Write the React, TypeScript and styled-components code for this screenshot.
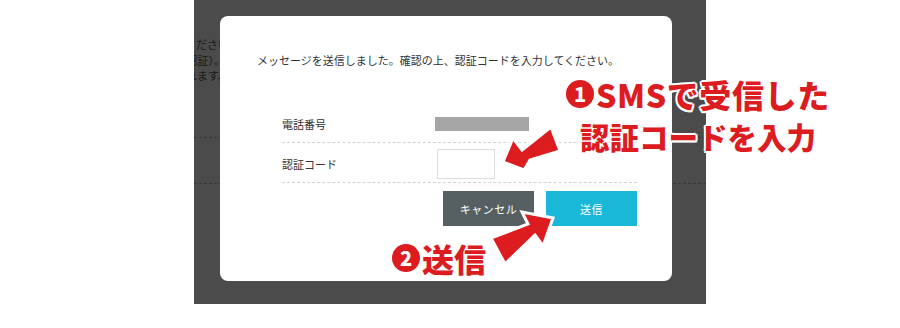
import styled, { createGlobalStyle } from "styled-components";

const GlobalStyle = createGlobalStyle`
  html, body {
    margin: 0;
    padding: 0;
    background: #ffffff;
  }
  body {
    font-family: "Noto Sans CJK JP", "Noto Sans", sans-serif;
  }
`;

const RED = "#dc1c1f";

const Stage = styled.div`
  position: relative;
  width: 900px;
  height: 328px;
  overflow: hidden;
  background: #ffffff;
  display: flex;
  padding-left: 194px;
  box-sizing: border-box;
`;

const Screen = styled.div`
  position: relative;
  width: 512px;
  height: 304px;
  background: #4b4b4b;
  overflow: hidden;
`;

const Underlay = styled.div`
  display: flex;
  flex-direction: column;
  padding-top: 37px;
`;

const UnderText = styled.div`
  width: 35px;
  display: flex;
  flex-direction: column;
  overflow: hidden;
  font-size: 11px;
  line-height: 15.5px;
  color: #1a1a1a;
`;

const UnderLine = styled.div<{ $shift?: number }>`
  display: flex;
  justify-content: flex-end;
  white-space: nowrap;
  padding-right: ${(p) => p.$shift ?? 0}px;
`;

const UnderRule = styled.div<{ $gap: number }>`
  margin-top: ${(p) => p.$gap}px;
  height: 0;
  border-top: 1px dashed rgba(0, 0, 0, 0.22);
`;

const Modal = styled.div`
  position: absolute;
  left: 26px;
  top: 16px;
  width: 452px;
  height: 265px;
  background: #ffffff;
  border-radius: 8px;
  color: #333333;
  font-size: 11px;
`;

const Message = styled.p`
  margin: 0;
  padding: 36px 0 0 37px;
  line-height: 16px;
  white-space: nowrap;
`;

const Form = styled.div`
  margin: 35px 0 0 62px;
  width: 355px;
  display: flex;
  flex-direction: column;
`;

const Row = styled.div`
  display: grid;
  grid-template-columns: 153px 1fr;
  align-items: center;
  height: 40px;
  box-sizing: border-box;
  padding-top: 2px;
  border-bottom: 1px dashed #d2d2d2;
`;

const Label = styled.span`
  line-height: 16px;
`;

const MaskedValue = styled.div`
  width: 94px;
  height: 14px;
  background: #a6a6a6;
`;

const CodeInput = styled.input`
  width: 58px;
  height: 30px;
  margin-left: 2px;
  box-sizing: border-box;
  border: 1px solid #dcdcdc;
  border-radius: 0;
  padding: 0;
  outline: none;
`;

const Actions = styled.div`
  display: flex;
  justify-content: flex-end;
  gap: 12px;
  margin-top: 8px;
`;

const Button = styled.button<{ $primary?: boolean }>`
  width: 91px;
  height: 35px;
  border: none;
  border-radius: 0;
  background: ${(p) => (p.$primary ? "#19b8d9" : "#565f61")};
  color: #ffffff;
  font-family: inherit;
  font-size: 11px;
  letter-spacing: 0.5px;
  cursor: pointer;
`;

const Callout = styled.div`
  position: absolute;
  display: flex;
  flex-direction: column;
  align-items: center;
  color: ${RED};
  font-weight: 900;
  line-height: 42px;
  white-space: nowrap;
  text-shadow: 2px 0 0 #fff, -2px 0 0 #fff, 0 2px 0 #fff, 0 -2px 0 #fff,
    1.5px 1.5px 0 #fff, -1.5px -1.5px 0 #fff, 1.5px -1.5px 0 #fff,
    -1.5px 1.5px 0 #fff;
`;

const CalloutLine = styled.span<{ $size: number; $track?: number }>`
  display: flex;
  align-items: center;
  font-size: ${(p) => p.$size}px;
  letter-spacing: ${(p) => p.$track ?? 0}px;
`;

const Num = styled.span<{ $d: number }>`
  display: inline-flex;
  align-items: center;
  justify-content: center;
  width: ${(p) => p.$d}px;
  height: ${(p) => p.$d}px;
  margin-right: 2px;
  border-radius: 50%;
  background: ${RED};
  color: #ffffff;
  font-size: ${(p) => Math.round(p.$d * 0.72)}px;
  font-weight: 900;
  letter-spacing: 0;
  line-height: 1;
  text-shadow: none;
  box-shadow: 0 0 0 1.5px #fff;
`;

const Arrows = styled.svg`
  position: absolute;
  left: 0;
  top: 0;
  width: 900px;
  height: 328px;
  pointer-events: none;
`;

export default function App() {
  return (
    <>
      <GlobalStyle />
      <Stage>
        <Screen>
          <Underlay>
            <UnderText>
              <UnderLine>コードを入力してください</UnderLine>
              <UnderLine $shift={4}>（SMS認証）。</UnderLine>
              <UnderLine>送信されます。</UnderLine>
            </UnderText>
            <UnderRule $gap={53} />
            <UnderRule $gap={45} />
          </Underlay>
          <Modal>
            <Message>
              メッセージを送信しました。確認の上、認証コードを入力してください。
            </Message>
            <Form>
              <Row>
                <Label>電話番号</Label>
                <MaskedValue />
              </Row>
              <Row>
                <Label>認証コード</Label>
                <CodeInput type="text" />
              </Row>
              <Actions>
                <Button>キャンセル</Button>
                <Button $primary>送信</Button>
              </Actions>
            </Form>
          </Modal>
        </Screen>

        <Arrows viewBox="0 0 900 328">
          <polygon
            points="503,162 513,138 522,150 551,127 560,151 530,160 524,170"
            fill={RED}
            stroke="#fff"
            strokeWidth="3"
            strokeLinejoin="miter"
          />
          <polygon
            points="553,218 543,246 535,235 505,264 491,238 528,224 522,212"
            fill={RED}
            stroke="#fff"
            strokeWidth="3"
            strokeLinejoin="miter"
          />
        </Arrows>

        <Callout style={{ left: 566, top: 73 }}>
          <CalloutLine $size={32} $track={0.6}>
            <Num $d={28}>1</Num>SMSで受信した
          </CalloutLine>
          <CalloutLine $size={29.5}>認証コードを入力</CalloutLine>
        </Callout>

        <Callout style={{ left: 392, top: 237 }}>
          <CalloutLine $size={32}>
            <Num $d={28}>2</Num>送信
          </CalloutLine>
        </Callout>
      </Stage>
    </>
  );
}
